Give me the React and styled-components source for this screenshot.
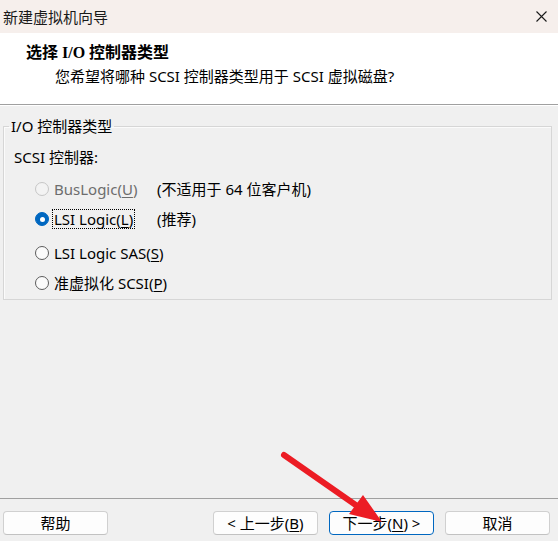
import React from 'react';
import styled, { createGlobalStyle } from 'styled-components';

const GlobalStyle = createGlobalStyle`
  html, body {
    margin: 0;
    padding: 0;
    background: #f0f0f0;
  }
  body {
    font-family: "Noto Sans", "Noto Sans CJK SC", sans-serif;
    font-size: 15px;
    line-height: 20px;
    color: #000;
  }
`;

const Window = styled.div`
  position: relative;
  width: 558px;
  height: 541px;
  display: flex;
  flex-direction: column;
  background: #f0f0f0;
  overflow: hidden;
`;

const TitleBar = styled.div`
  height: 33px;
  flex: none;
  display: flex;
  align-items: center;
  justify-content: space-between;
  padding: 0 11px 0 3px;
  background: #f6efec;
  color: #1a1a1a;
`;

const CloseIcon = () => (
  <svg width="11" height="11" viewBox="0 0 11 11">
    <path d="M0.5 0.5 L10.5 10.5 M10.5 0.5 L0.5 10.5" stroke="#1a1a1a" strokeWidth="1.1" fill="none" />
  </svg>
);

const Header = styled.div`
  height: 72px;
  flex: none;
  background: #fff;
  padding-top: 10px;
  box-sizing: border-box;
  border-bottom: 1px solid #a0a0a0;
`;

const HeaderTitle = styled.div`
  padding-left: 26px;
  font-family: "Liberation Serif", "Noto Sans CJK SC", serif;
  font-weight: bold;
  font-size: 16px;
`;

const HeaderSub = styled.div`
  margin-top: 3px;
  padding-left: 55px;
`;

const Body = styled.div`
  flex: 1;
  padding: 0 6px 0 3px;
  border-top: 1px solid #fff;
`;

const Group = styled.fieldset`
  margin: 10px 0 0 0;
  padding: 0 10px 6px 10px;
  border: 1px solid #d6d6d6;
  box-shadow: inset 1px 1px 0 #fbfbfb;
`;

const Legend = styled.legend`
  margin-left: -5px;
  padding: 0 2px;
  line-height: 20px;
`;

const FieldLabel = styled.div`
  margin-top: 11px;
`;

const Row = styled.div`
  display: flex;
  align-items: center;
  height: 20px;
  margin-top: ${p => p.$gap}px;
  padding-left: 21px;
  white-space: nowrap;
`;

const Radio = styled.span`
  flex: none;
  box-sizing: border-box;
  width: 14px;
  height: 14px;
  border-radius: 50%;
  margin-right: 5px;
  border: 1px solid ${p => (p.$disabled ? '#c6c6c6' : '#5c5c5c')};
  background: ${p => (p.$disabled ? '#f3f3f3' : '#fbfbfb')};
  display: flex;
  align-items: center;
  justify-content: center;

  ${p =>
    p.$checked &&
    `
    border-color: #0067c0;
    background: #0067c0;
    &::after {
      content: '';
      width: 5px;
      height: 5px;
      border-radius: 50%;
      background: #fff;
    }
  `}
`;

const OptionCell = styled.span`
  min-width: 103px;
  flex: none;
  white-space: nowrap;
  color: ${p => (p.$disabled ? '#6d6d6d' : '#000')};
`;

const OptionText = styled.span`
  display: inline-block;
  margin-left: -1px;
  padding: 0 1px;
  line-height: 18px;
  outline: ${p => (p.$focused ? '1px dotted #000' : 'none')};
  outline-offset: 0;
`;

const Note = styled.span`
  white-space: nowrap;
`;

const Footer = styled.div`
  flex: none;
  height: 43px;
  box-sizing: border-box;
  border-top: 1px solid #a0a0a0;
  display: flex;
  align-items: flex-start;
  padding: 12px 8px 0 3px;
`;

const Button = styled.button`
  width: 105px;
  height: 24px;
  box-sizing: border-box;
  padding: 0;
  margin-left: ${p => p.$ml || 0}px;
  font: inherit;
  line-height: 20px;
  color: #000;
  background: #fdfdfd;
  border: 1px solid ${p => (p.$primary ? '#0067c0' : '#d0d0d0')};
  border-radius: 4px;
  ${p => !p.$primary && 'border-bottom-color: #c2c2c2;'}
`;

const Key = styled.u`
  text-underline-offset: 2px;
`;

const Arrow = styled.svg`
  position: absolute;
  left: 0;
  top: 0;
  pointer-events: none;
`;

const options = [
  { label: 'BusLogic', key: 'U', note: '(不适用于 64 位客户机)', disabled: true, gap: 12 },
  { label: 'LSI Logic', key: 'L', note: '(推荐)', checked: true, focused: true, gap: 10 },
  { label: 'LSI Logic SAS', key: 'S', gap: 14 },
  { label: '准虚拟化 SCSI', key: 'P', gap: 10 },
];

export default function App() {
  return (
    <Window>
      <GlobalStyle />
      <TitleBar>
        <span>新建虚拟机向导</span>
        <CloseIcon />
      </TitleBar>
      <Header>
        <HeaderTitle>选择 I/O 控制器类型</HeaderTitle>
        <HeaderSub>您希望将哪种 SCSI 控制器类型用于 SCSI 虚拟磁盘?</HeaderSub>
      </Header>
      <Body>
        <Group>
          <Legend>I/O 控制器类型</Legend>
          <FieldLabel>SCSI 控制器:</FieldLabel>
          {options.map(o => (
            <Row key={o.key} $gap={o.gap}>
              <Radio $checked={o.checked} $disabled={o.disabled} />
              <OptionCell $disabled={o.disabled}>
                <OptionText $focused={o.focused}>
                  {o.label}(<Key>{o.key}</Key>)
                </OptionText>
              </OptionCell>
              {o.note && <Note>{o.note}</Note>}
            </Row>
          ))}
        </Group>
      </Body>
      <Footer>
        <Button>帮助</Button>
        <Button $ml={105}>&lt; 上一步(<Key>B</Key>)</Button>
        <Button $ml={11} $primary>下一步(<Key>N</Key>) &gt;</Button>
        <Button $ml={11}>取消</Button>
      </Footer>
      <Arrow width="558" height="541" viewBox="0 0 558 541">
        <line x1="284" y1="455" x2="360" y2="508" stroke="#ec1c24" strokeWidth="6" strokeLinecap="round" />
        <polygon points="382,522 349,514 363,495" fill="#ec1c24" />
      </Arrow>
    </Window>
  );
}
